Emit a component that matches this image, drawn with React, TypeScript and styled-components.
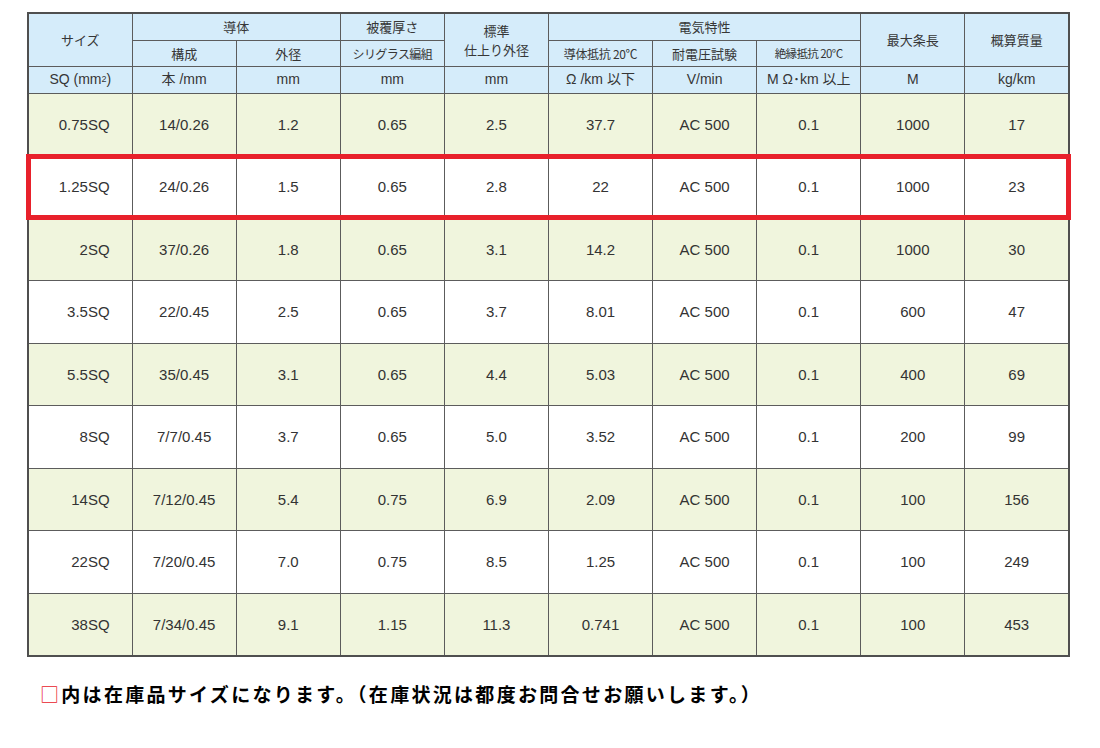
import React from 'react';
import styled, { createGlobalStyle } from 'styled-components';

const GlobalStyle = createGlobalStyle`
  html, body { margin: 0; padding: 0; background: #ffffff; }
  body { font-family: "Liberation Sans", "Noto Sans CJK JP", sans-serif; color: #333333; }
`;

const Page = styled.div`
  width: 1100px;
  box-sizing: border-box;
  padding: 12px 0 0 27px;
`;

const Table = styled.table`
  width: 1043px;
  table-layout: fixed;
  border-collapse: collapse;
  border: 2px solid #4f4f4f;
`;

const HeadRow = styled.tr<{ $h: number }>`
  height: ${(p) => p.$h}px;
`;

const Th = styled.th<{ $size?: number; $track?: number; $cjk?: boolean; $topLight?: boolean }>`
  background: #d5ecfa;
  border: 1px solid #5c5c5c;
  ${(p) => (p.$topLight ? 'border-top-color: #8a98a4;' : '')}
  padding: 0;
  text-align: center;
  vertical-align: middle;
  font-weight: normal;
  color: #363636;
  font-family: ${(p) =>
    p.$cjk ? '"Noto Sans CJK JP", sans-serif' : '"Liberation Sans", "Noto Sans CJK JP", sans-serif'};
  font-size: ${(p) => p.$size ?? 13}px;
  letter-spacing: ${(p) => p.$track ?? 0}px;
  line-height: 19px;
  white-space: nowrap;
`;

const Sup = styled.span`
  font-size: 9px;
  vertical-align: 2px;
`;

const Row = styled.tr<{ $shade: boolean; $mark: boolean }>`
  height: 62.5px;
  background: ${(p) => (p.$shade ? '#f0f5dd' : '#ffffff')};
  ${(p) => (p.$mark ? 'outline: 5px solid #e8212b; outline-offset: -3px;' : '')}
`;

const Td = styled.td<{ $first?: boolean }>`
  border: 1px solid #5c5c5c;
  padding: ${(p) => (p.$first ? '0 22px 0 0' : '0')};
  text-align: ${(p) => (p.$first ? 'right' : 'center')};
  vertical-align: middle;
  font-size: 15px;
  color: #333333;
  white-space: nowrap;
`;

const Note = styled.p`
  margin: 23px 0 0 13px;
  font-family: "Noto Sans CJK JP", sans-serif;
  font-weight: bold;
  font-size: 19px;
  letter-spacing: 2.3px;
  line-height: 28px;
  color: #000000;
  white-space: nowrap;
`;

const Mark = styled.span`
  color: #e8212b;
  font-weight: normal;
`;

const rows: string[][] = [
  ['0.75SQ', '14/0.26', '1.2', '0.65', '2.5', '37.7', 'AC 500', '0.1', '1000', '17'],
  ['1.25SQ', '24/0.26', '1.5', '0.65', '2.8', '22', 'AC 500', '0.1', '1000', '23'],
  ['2SQ', '37/0.26', '1.8', '0.65', '3.1', '14.2', 'AC 500', '0.1', '1000', '30'],
  ['3.5SQ', '22/0.45', '2.5', '0.65', '3.7', '8.01', 'AC 500', '0.1', '600', '47'],
  ['5.5SQ', '35/0.45', '3.1', '0.65', '4.4', '5.03', 'AC 500', '0.1', '400', '69'],
  ['8SQ', '7/7/0.45', '3.7', '0.65', '5.0', '3.52', 'AC 500', '0.1', '200', '99'],
  ['14SQ', '7/12/0.45', '5.4', '0.75', '6.9', '2.09', 'AC 500', '0.1', '100', '156'],
  ['22SQ', '7/20/0.45', '7.0', '0.75', '8.5', '1.25', 'AC 500', '0.1', '100', '249'],
  ['38SQ', '7/34/0.45', '9.1', '1.15', '11.3', '0.741', 'AC 500', '0.1', '100', '453'],
];

export default function App() {
  return (
    <Page>
      <GlobalStyle />
      <Table>
        <colgroup>
          {Array.from({ length: 10 }).map((_, i) => (
            <col key={i} style={{ width: '10%' }} />
          ))}
        </colgroup>
        <thead>
          <HeadRow $h={27}>
            <Th rowSpan={2} $cjk>サイズ</Th>
            <Th colSpan={2} $cjk>導体</Th>
            <Th $cjk>被覆厚さ</Th>
            <Th rowSpan={2} $cjk>
              標準
              <br />
              仕上り外径
            </Th>
            <Th colSpan={3} $cjk>電気特性</Th>
            <Th rowSpan={2} $cjk>最大条長</Th>
            <Th rowSpan={2} $cjk>概算質量</Th>
          </HeadRow>
          <HeadRow $h={26}>
            <Th $cjk $topLight>構成</Th>
            <Th $cjk $topLight>外径</Th>
            <Th $cjk $size={12} $track={-0.6} $topLight>シリグラス編組</Th>
            <Th $cjk $size={12} $track={-0.3} $topLight>導体抵抗 20℃</Th>
            <Th $cjk $topLight>耐電圧試験</Th>
            <Th $cjk $size={11.5} $track={-0.6} $topLight>絶縁抵抗 20℃</Th>
          </HeadRow>
          <HeadRow $h={27}>
            <Th $size={14}>
              SQ (mm<Sup>2</Sup>)
            </Th>
            <Th $size={14}>本 /mm</Th>
            <Th $size={14}>mm</Th>
            <Th $size={14}>mm</Th>
            <Th $size={14}>mm</Th>
            <Th $size={14}>Ω /km 以下</Th>
            <Th $size={14}>V/min</Th>
            <Th $size={14}>M Ω･km 以上</Th>
            <Th $size={14}>M</Th>
            <Th $size={14}>kg/km</Th>
          </HeadRow>
        </thead>
        <tbody>
          {rows.map((r, i) => (
            <Row key={r[0]} $shade={i % 2 === 0} $mark={i === 1}>
              {r.map((c, j) => (
                <Td key={j} $first={j === 0}>
                  {c}
                </Td>
              ))}
            </Row>
          ))}
        </tbody>
      </Table>
      <Note>
        <Mark>□</Mark>内は在庫品サイズになります。（在庫状況は都度お問合せお願いします。）
      </Note>
    </Page>
  );
}
